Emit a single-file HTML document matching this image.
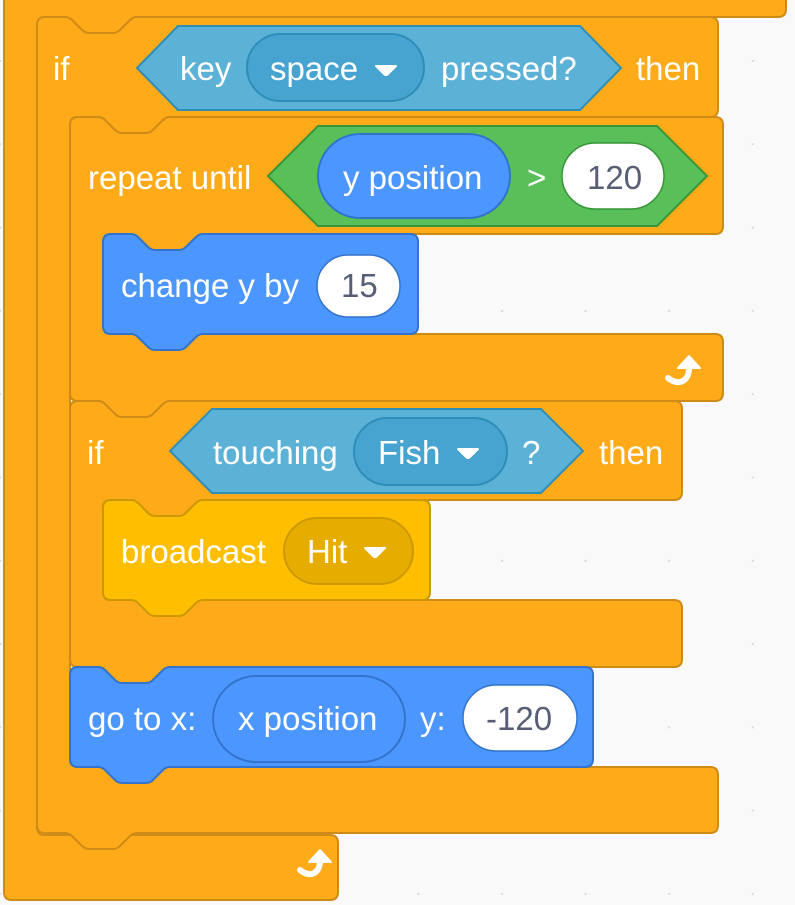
<!DOCTYPE html>
<html><head><meta charset="utf-8"><style>
html,body{margin:0;padding:0;background:#F9F9F9;}
svg{display:block;}
text{font-family:"Liberation Sans",Arial,sans-serif;font-size:33px;fill:#fff;}
.n{fill:#575E75;}
</style></head><body>
<svg width="795" height="905" viewBox="0 0 795 905" xmlns="http://www.w3.org/2000/svg">
<defs>
<pattern id="dots" x="0" y="0" width="83.6" height="83.3" patternUnits="userSpaceOnUse" patternTransform="translate(83,60)">
<circle cx="0.5" cy="0.5" r="1.6" fill="#D9D9D9"/>
</pattern>
</defs>
<rect width="795" height="905" fill="#F9F9F9"/>
<rect width="795" height="905" fill="url(#dots)"/>

<path d="M4,-20 H786 V9 q0,8 -8,8 H137 c-4,0 -6,2 -8,4 l-8,8 c-2,2 -4,4 -8,4 h-24 c-4,0 -6,-2 -8,-4 l-8,-8 c-2,-2 -4,-4 -8,-4 H45 q-8,0 -8,8 V827 q0,8 8,8 H330 q8,0 8,8 V892 q0,8 -8,8 H12 q-8,0 -8,-8 Z" fill="#FFAB19" stroke="#CF8B17" stroke-width="2"/>
<path d="M300,870 c10,8 20,4 20,-10" fill="none" stroke="#fff" stroke-width="6" stroke-linecap="round"/>
<path d="M309,862 L320,850 L331,862 Z" fill="#fff" stroke="#fff" stroke-width="2" stroke-linejoin="round"/>

<path d="M37,25 q0,-8 8,-8 H65 c4,0 6,2 8,4 l8,8 c2,2 4,4 8,4 h24 c4,0 6,-2 8,-4 l8,-8 c2,-2 4,-4 8,-4 H710 q8,0 8,8 V109 q0,8 -8,8 H170 c-4,0 -6,2 -8,4 l-8,8 c-2,2 -4,4 -8,4 h-24 c-4,0 -6,-2 -8,-4 l-8,-8 c-2,-2 -4,-4 -8,-4 H78 q-8,0 -8,8 V759 q0,8 8,8 H710 q8,0 8,8 V825 q0,8 -8,8 H137 c-4,0 -6,2 -8,4 l-8,8 c-2,2 -4,4 -8,4 h-24 c-4,0 -6,-2 -8,-4 l-8,-8 c-2,-2 -4,-4 -8,-4 H45 q-8,0 -8,-8 Z" fill="#FFAB19" stroke="#CF8B17" stroke-width="2"/>
<text x="53" y="80">if</text>
<path d="M137,68 L178,26 H580 L621,68 L580,110 H178 Z" fill="#5CB1D6" stroke="#2E8EB8" stroke-width="2"/>
<text x="180" y="80">key</text>
<rect x="247" y="34" width="177" height="67" rx="33.5" fill="#47A3D0" stroke="#2E8EB8" stroke-width="2"/>
<text x="270" y="80">space</text>
<path d="M376,66 h20 l-8,8 q-2,2 -4,0 Z" fill="#fff" stroke="#fff" stroke-width="2" stroke-linejoin="round"/>
<text x="441" y="80">pressed?</text>
<text x="636" y="80">then</text>

<path d="M70,125 q0,-8 8,-8 H98 c4,0 6,2 8,4 l8,8 c2,2 4,4 8,4 h24 c4,0 6,-2 8,-4 l8,-8 c2,-2 4,-4 8,-4 H715 q8,0 8,8 V226 q0,8 -8,8 H203 c-4,0 -6,2 -8,4 l-8,8 c-2,2 -4,4 -8,4 h-24 c-4,0 -6,-2 -8,-4 l-8,-8 c-2,-2 -4,-4 -8,-4 H111 q-8,0 -8,8 V326 q0,8 8,8 H715 q8,0 8,8 V393 q0,8 -8,8 H170 c-4,0 -6,2 -8,4 l-8,8 c-2,2 -4,4 -8,4 h-24 c-4,0 -6,-2 -8,-4 l-8,-8 c-2,-2 -4,-4 -8,-4 H78 q-8,0 -8,-8 Z" fill="#FFAB19" stroke="#CF8B17" stroke-width="2"/>
<text x="88" y="189">repeat until</text>
<path d="M268,176 L318,126 H657 L707,176 L657,226 H318 Z" fill="#59C059" stroke="#389438" stroke-width="2"/>
<rect x="318" y="134" width="192" height="84" rx="42" fill="#4C97FF" stroke="#3373CC" stroke-width="2"/>
<text x="343" y="189">y position</text>
<text x="527" y="189">&gt;</text>
<rect x="562" y="143" width="102" height="66" rx="33" fill="#fff" stroke="#389438" stroke-width="1.5"/>
<text x="587" y="189" class="n">120</text>
<path d="M668,378 c10,8 21,4 21,-10" fill="none" stroke="#fff" stroke-width="6" stroke-linecap="round"/>
<path d="M678,368 L689,356 L700,368 Z" fill="#fff" stroke="#fff" stroke-width="2" stroke-linejoin="round"/>

<path d="M103,242 q0,-8 8,-8 H131 c4,0 6,2 8,4 l8,8 c2,2 4,4 8,4 h24 c4,0 6,-2 8,-4 l8,-8 c2,-2 4,-4 8,-4 H410 q8,0 8,8 V326 q0,8 -8,8 H203 c-4,0 -6,2 -8,4 l-8,8 c-2,2 -4,4 -8,4 h-24 c-4,0 -6,-2 -8,-4 l-8,-8 c-2,-2 -4,-4 -8,-4 H111 q-8,0 -8,-8 Z" fill="#4C97FF" stroke="#3373CC" stroke-width="2"/>
<text x="121" y="297">change y by</text>
<rect x="317" y="255" width="83" height="62" rx="31" fill="#fff" stroke="#3373CC" stroke-width="1.5"/>
<text x="341" y="297" class="n">15</text>

<path d="M70,409 q0,-8 8,-8 H98 c4,0 6,2 8,4 l8,8 c2,2 4,4 8,4 h24 c4,0 6,-2 8,-4 l8,-8 c2,-2 4,-4 8,-4 H674 q8,0 8,8 V492 q0,8 -8,8 H203 c-4,0 -6,2 -8,4 l-8,8 c-2,2 -4,4 -8,4 h-24 c-4,0 -6,-2 -8,-4 l-8,-8 c-2,-2 -4,-4 -8,-4 H111 q-8,0 -8,8 V592 q0,8 8,8 H674 q8,0 8,8 V659 q0,8 -8,8 H170 c-4,0 -6,2 -8,4 l-8,8 c-2,2 -4,4 -8,4 h-24 c-4,0 -6,-2 -8,-4 l-8,-8 c-2,-2 -4,-4 -8,-4 H78 q-8,0 -8,-8 Z" fill="#FFAB19" stroke="#CF8B17" stroke-width="2"/>
<text x="87" y="464">if</text>
<path d="M170,451 L212,409 H541 L583,451 L541,493 H212 Z" fill="#5CB1D6" stroke="#2E8EB8" stroke-width="2"/>
<text x="213" y="464">touching</text>
<rect x="354" y="418" width="153" height="67" rx="33.5" fill="#47A3D0" stroke="#2E8EB8" stroke-width="2"/>
<text x="378" y="464">Fish</text>
<path d="M458,449 h20 l-8,8 q-2,2 -4,0 Z" fill="#fff" stroke="#fff" stroke-width="2" stroke-linejoin="round"/>
<text x="522" y="464">?</text>
<text x="599" y="464">then</text>

<path d="M103,508 q0,-8 8,-8 H131 c4,0 6,2 8,4 l8,8 c2,2 4,4 8,4 h24 c4,0 6,-2 8,-4 l8,-8 c2,-2 4,-4 8,-4 H422 q8,0 8,8 V592 q0,8 -8,8 H203 c-4,0 -6,2 -8,4 l-8,8 c-2,2 -4,4 -8,4 h-24 c-4,0 -6,-2 -8,-4 l-8,-8 c-2,-2 -4,-4 -8,-4 H111 q-8,0 -8,-8 Z" fill="#FFBF00" stroke="#CC9900" stroke-width="2"/>
<text x="121" y="563">broadcast</text>
<rect x="284" y="518" width="129" height="66" rx="33" fill="#E6AC00" stroke="#CC9900" stroke-width="2"/>
<text x="307" y="563">Hit</text>
<path d="M365,548 h20 l-8,8 q-2,2 -4,0 Z" fill="#fff" stroke="#fff" stroke-width="2" stroke-linejoin="round"/>

<path d="M70,675 q0,-8 8,-8 H98 c4,0 6,2 8,4 l8,8 c2,2 4,4 8,4 h24 c4,0 6,-2 8,-4 l8,-8 c2,-2 4,-4 8,-4 H585 q8,0 8,8 V759 q0,8 -8,8 H170 c-4,0 -6,2 -8,4 l-8,8 c-2,2 -4,4 -8,4 h-24 c-4,0 -6,-2 -8,-4 l-8,-8 c-2,-2 -4,-4 -8,-4 H78 q-8,0 -8,-8 Z" fill="#4C97FF" stroke="#3373CC" stroke-width="2"/>
<text x="88" y="730">go to x:</text>
<rect x="213" y="676" width="192" height="86" rx="43" fill="#4C97FF" stroke="#3373CC" stroke-width="2"/>
<text x="238" y="730">x position</text>
<text x="420" y="730">y:</text>
<rect x="463" y="685" width="114" height="66" rx="33" fill="#fff" stroke="#3373CC" stroke-width="1.5"/>
<text x="486" y="730" class="n">-120</text>
</svg>
</body></html>
